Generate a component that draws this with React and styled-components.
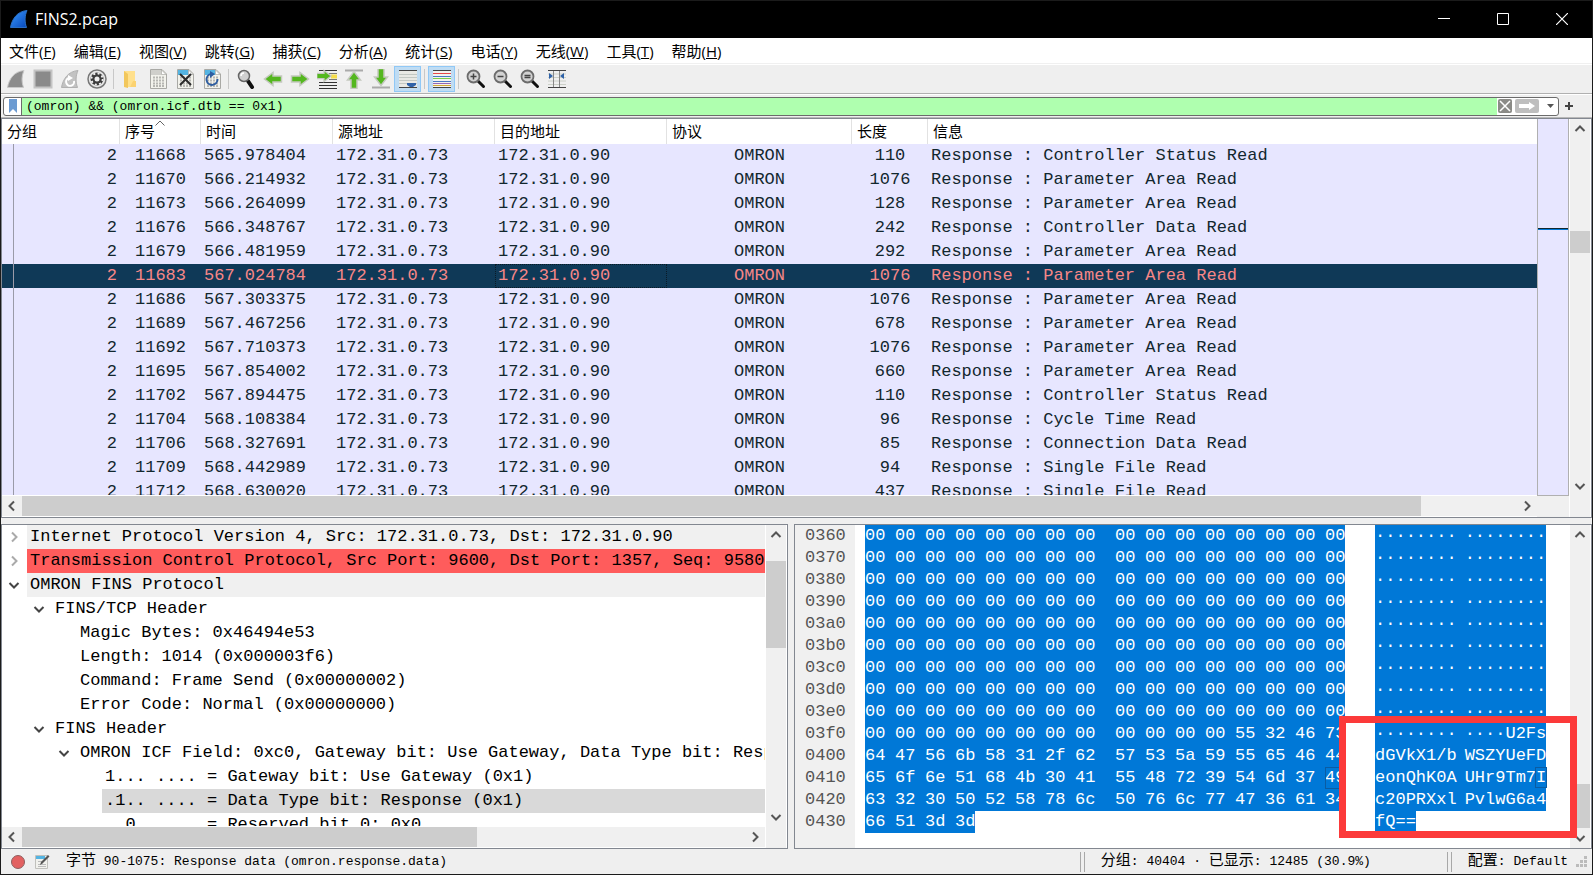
import React from "react";
import styled, { createGlobalStyle } from "styled-components";

const MONO = `"Liberation Mono", "Noto Sans CJK SC", monospace`;
const UI = `"Open Sans", "Noto Sans CJK SC", sans-serif`;

const menus = [
  ["文件", "F"],
  ["编辑", "E"],
  ["视图", "V"],
  ["跳转", "G"],
  ["捕获", "C"],
  ["分析", "A"],
  ["统计", "S"],
  ["电话", "Y"],
  ["无线", "W"],
  ["工具", "T"],
  ["帮助", "H"],
];

const columns = [
  { label: "分组", width: 118 },
  { label: "序号", width: 81, sorted: true },
  { label: "时间", width: 132 },
  { label: "源地址", width: 162 },
  { label: "目的地址", width: 172 },
  { label: "协议", width: 185 },
  { label: "长度", width: 76 },
  { label: "信息" },
];

const packets = [
  ["11668", "565.978404", "110", "Controller Status Read"],
  ["11670", "566.214932", "1076", "Parameter Area Read"],
  ["11673", "566.264099", "128", "Parameter Area Read"],
  ["11676", "566.348767", "242", "Controller Data Read"],
  ["11679", "566.481959", "292", "Parameter Area Read"],
  ["11683", "567.024784", "1076", "Parameter Area Read"],
  ["11686", "567.303375", "1076", "Parameter Area Read"],
  ["11689", "567.467256", "678", "Parameter Area Read"],
  ["11692", "567.710373", "1076", "Parameter Area Read"],
  ["11695", "567.854002", "660", "Parameter Area Read"],
  ["11702", "567.894475", "110", "Controller Status Read"],
  ["11704", "568.108384", "96", "Cycle Time Read"],
  ["11706", "568.327691", "85", "Connection Data Read"],
  ["11709", "568.442989", "94", "Single File Read"],
  ["11712", "568.630020", "437", "Single File Read"],
];
const selectedPacket = "11683";

const details = [
  { level: 0, arrow: "closed", tone: "#f0f0f0", text: "Internet Protocol Version 4, Src: 172.31.0.73, Dst: 172.31.0.90" },
  { level: 0, arrow: "closed", tone: "#ff5c5c", text: "Transmission Control Protocol, Src Port: 9600, Dst Port: 1357, Seq: 9580," },
  { level: 0, arrow: "open", tone: "#f0f0f0", text: "OMRON FINS Protocol" },
  { level: 1, arrow: "open", text: "FINS/TCP Header" },
  { level: 2, text: "Magic Bytes: 0x46494e53" },
  { level: 2, text: "Length: 1014 (0x000003f6)" },
  { level: 2, text: "Command: Frame Send (0x00000002)" },
  { level: 2, text: "Error Code: Normal (0x00000000)" },
  { level: 1, arrow: "open", text: "FINS Header" },
  { level: 2, arrow: "open", text: "OMRON ICF Field: 0xc0, Gateway bit: Use Gateway, Data Type bit: Response" },
  { level: 3, text: "1... .... = Gateway bit: Use Gateway (0x1)" },
  { level: 3, tone: "#d9d9d9", text: ".1.. .... = Data Type bit: Response (0x1)" },
  { level: 3, text: "..0. .... = Reserved bit 0: 0x0" },
];

const zeros = "00 ".repeat(16).trim();
const dump = [
  ["0360", zeros],
  ["0370", zeros],
  ["0380", zeros],
  ["0390", zeros],
  ["03a0", zeros],
  ["03b0", zeros],
  ["03c0", zeros],
  ["03d0", zeros],
  ["03e0", zeros],
  ["03f0", "00 00 00 00 00 00 00 00 00 00 00 00 55 32 46 73"],
  ["0400", "64 47 56 6b 58 31 2f 62 57 53 5a 59 55 65 46 44"],
  ["0410", "65 6f 6e 51 68 4b 30 41 55 48 72 39 54 6d 37 49"],
  ["0420", "63 32 30 50 52 58 78 6c 50 76 6c 77 47 36 61 34"],
  ["0430", "66 51 3d 3d"],
];
const hovered = { row: "0410", index: 15 };

const toAscii = (byte) => {
  const code = parseInt(byte, 16);
  return code > 31 && code < 127 ? String.fromCharCode(code) : "·";
};

/* ---------- icons ---------- */

const Fin = ({ fill, edge }) => (
  <path d="M1.5 18.5C3 10 8 2.5 18 1.5C15.500 7 15.500 13 17.500 18.500Z" fill={fill} stroke={edge} strokeWidth="1" />
);

const Sheet = ({ head, children }) => (
  <>
    <path d="M2.500 .5H14L18.500 5V19.500H2.500Z" fill="#f2f2ec" stroke="#a9a9a5" />
    <path d="M3 1H13.500V6H3Z" fill={head} />
    <path d="M13.500 1V5.500H18Z" fill="#fff" stroke="#a9a9a5" strokeWidth=".7" />
    {children}
  </>
);

const Dots = () => (
  <path d="M5 8.500H16M5 11.500H16M5 14.500H16M5 17H16" stroke="#b6b6b2" strokeWidth="2" strokeDasharray="2 1" />
);

const Arrow = ({ turn = 0, x = 10, y = 10, size = 1 }) => (
  <path
    transform={`translate(${x} ${y}) rotate(${turn}) scale(${size})`}
    d="M-8.500 -3H0V-6.500L8.500 0L0 6.500V3H-8.500Z"
    fill="#54b71f"
    stroke="#c5c9c0"
    strokeWidth="1.500"
  />
);

const Lens = ({ children }) => (
  <>
    <path d="M12 12L17.500 17.500" stroke="#111" strokeWidth="3" strokeLinecap="round" />
    <circle cx="7.500" cy="7.500" r="6" fill="#d2d2d2" stroke="#6c6c6c" strokeWidth="1.800" />
    {children}
  </>
);

const icons = {
  start: <Fin fill="#8c8c8c" edge="#c9c9c9" />,
  stop: <rect x="1.500" y="1.500" width="17" height="17" fill="#8a8a8a" stroke="#c4c4c4" strokeWidth="2" />,
  restart: (
    <>
      <Fin fill="#c2c2c2" edge="#b0b0b0" />
      <path d="M9 9A4 4 0 1 0 14 12" fill="none" stroke="#fff" strokeWidth="2" />
      <path d="M8 6L13 9L8 12Z" fill="#fff" />
    </>
  ),
  options: (
    <>
      <circle cx="10" cy="10" r="9" fill="#e8e8e8" stroke="#777" strokeWidth="1.500" />
      <circle cx="10" cy="10" r="6.500" fill="#3c3c3c" />
      <circle cx="10" cy="10" r="5.500" fill="none" stroke="#eee" strokeWidth="2" strokeDasharray="2 2.300" />
      <circle cx="10" cy="10" r="4.500" fill="#3c3c3c" />
      <circle cx="10" cy="10" r="2.500" fill="#eee" />
    </>
  ),
  open: (
    <>
      <path d="M3 2H14V18H3Z" fill="#ffe08c" />
      <path d="M3 2L7 5V19L3 18Z" fill="#f2c75c" />
      <path d="M12 12H15V18H9Z" fill="#fbd271" />
    </>
  ),
  save: (
    <Sheet head="#cfcfcb">
      <Dots />
    </Sheet>
  ),
  close: (
    <Sheet head="#54b4e2">
      <Dots />
      <path d="M5 5L16 16M16 5L5 16" stroke="#2b2b2b" strokeWidth="2" />
    </Sheet>
  ),
  reload: (
    <Sheet head="#54b4e2">
      <Dots />
      <path d="M9 5A5.500 5.500 0 1 0 15.500 10" fill="none" stroke="#2e5da0" strokeWidth="2" />
      <path d="M8 2L13 5L8 9Z" fill="#2e5da0" />
    </Sheet>
  ),
  find: (
    <>
      <path d="M12 12L16 18" stroke="#111" strokeWidth="4" strokeLinecap="round" />
      <circle cx="8" cy="7" r="5.500" fill="#cfcfcf" stroke="#666" strokeWidth="1.500" />
      <path d="M5 7A3 3 0 0 1 8 4" fill="none" stroke="#fff" strokeWidth="1.500" />
    </>
  ),
  back: <Arrow turn={180} />,
  forward: <Arrow />,
  goto: (
    <>
      <path d="M2 1.500H20M2 13.500H20M2 16.500H20M2 19.500H20" stroke="#333" />
      <path d="M12 4.500H20M12 10.500H20" stroke="#777" />
      <path d="M14 7.500H20" stroke="#f5dc49" strokeWidth="4" />
      <Arrow x={7} y={7} size={0.85} />
    </>
  ),
  top: (
    <>
      <path d="M1 1.500H19" stroke="#aaa" strokeWidth="2" />
      <Arrow turn={-90} y={11} />
    </>
  ),
  bottom: (
    <>
      <path d="M1 18.500H19" stroke="#aaa" strokeWidth="2" />
      <Arrow turn={90} y={8} />
    </>
  ),
  follow: (
    <>
      <path d="M1 2H19V18H1Z" fill="#e9e9e4" />
      <path d="M1 5.500H19M1 8.500H19M1 11.500H19M1 14.500H19" stroke="#c3c8c3" />
      <path d="M1 1.500H19M1 18.500H19" stroke="#444" />
      <path d="M9 14H18V16L15 18H12L9 16Z" fill="#2f62a8" />
    </>
  ),
  colorize: (
    <>
      <path d="M1 2H19V18H1Z" fill="#f3f3ef" />
      <path d="M1 1.500H19M1 18.500H19" stroke="#444" />
      <path d="M1 4.500H19" stroke="#e5484a" />
      <path d="M1 7.500H19" stroke="#4a78c4" />
      <path d="M1 9.500H19" stroke="#7bd04b" />
      <path d="M1 12.500H19" stroke="#4a78c4" />
      <path d="M1 14.500H19" stroke="#9468b5" />
      <path d="M1 16.500H19" stroke="#d0a534" />
    </>
  ),
  zoomIn: (
    <Lens>
      <path d="M4.500 7.500H10.500M7.500 4.500V10.500" stroke="#444" strokeWidth="1.500" />
    </Lens>
  ),
  zoomOut: (
    <Lens>
      <path d="M4.500 7.500H10.500" stroke="#444" strokeWidth="1.500" />
    </Lens>
  ),
  zoomReset: (
    <Lens>
      <path d="M4.500 6.500H10.500M4.500 8.500H10.500" stroke="#444" strokeWidth="1.500" />
    </Lens>
  ),
  resize: (
    <>
      <path d="M1 5H19M1 8.500H19M1 12H19M1 15.500H19" stroke="#ccd0c8" />
      <path d="M1 1.500H19M1 18.500H19" stroke="#444" />
      <path d="M6.500 2V18M12.500 2V18" stroke="#888" />
      <path d="M2 4L6 7L2 10ZM17 4L13 7L17 10Z" fill="#2f62a8" />
    </>
  ),
};

const toolbar = [
  ["start", "开始捕获"],
  ["stop", "停止捕获"],
  ["restart", "重新开始捕获"],
  ["options", "捕获选项"],
  null,
  ["open", "打开"],
  ["save", "保存"],
  ["close", "关闭"],
  ["reload", "重新加载"],
  null,
  ["find", "查找分组"],
  ["back", "后退"],
  ["forward", "前进"],
  ["goto", "转到分组"],
  ["top", "首个分组"],
  ["bottom", "最新分组"],
  ["follow", "自动滚动", true],
  null,
  ["colorize", "着色", true],
  null,
  ["zoomIn", "放大"],
  ["zoomOut", "缩小"],
  ["zoomReset", "普通大小"],
  ["resize", "调整列宽"],
];

const Chevron = ({ turn = 0, color = "#555" }) => (
  <svg width="12" height="12" viewBox="0 0 12 12" aria-hidden="true">
    <path d="M1.500 8L6 3.500L10.500 8" transform={`rotate(${turn} 6 6)`} fill="none" stroke={color} strokeWidth="2" />
  </svg>
);

/* ---------- pieces ---------- */

// before / thumb / after are the shares of the track
const ScrollBar = ({ horizontal, before, thumb, after }) => (
  <Track $horizontal={horizontal}>
    <ScrollButton aria-label={horizontal ? "向左" : "向上"}>
      <Chevron turn={horizontal ? -90 : 0} />
    </ScrollButton>
    <TrackSpace $share={before} />
    <Thumb $share={thumb} />
    <TrackSpace $share={after} />
    <ScrollButton aria-label={horizontal ? "向右" : "向下"}>
      <Chevron turn={horizontal ? 90 : 180} />
    </ScrollButton>
  </Track>
);

const PacketList = () => (
  <PacketPane>
    <ListSide>
      <Clip>
        <Table>
          <colgroup>
            {columns.map((c) => (
              <Col key={c.label} $width={c.width} />
            ))}
          </colgroup>
          <thead>
            <tr>
              {columns.map((c) => (
                <Head key={c.label}>
                  {c.label}
                  {c.sorted && (
                    <SortMark width="10" height="6" viewBox="0 0 10 6" aria-hidden="true">
                      <path d="M.5 5.500L5 1L9.500 5.500" fill="none" stroke="#666" />
                    </SortMark>
                  )}
                </Head>
              ))}
            </tr>
          </thead>
          <tbody>
            {packets.map(([no, time, length, info]) => (
              <PacketRow key={no} $selected={no === selectedPacket}>
                <GroupCell>2</GroupCell>
                <Cell $align="center">{no}</Cell>
                <Cell>{time}</Cell>
                <Cell>172.31.0.73</Cell>
                <Cell $focused={no === selectedPacket}>172.31.0.90</Cell>
                <Cell $align="center">OMRON</Cell>
                <Cell $align="center">{length}</Cell>
                <Cell>Response : {info}</Cell>
              </PacketRow>
            ))}
          </tbody>
        </Table>
      </Clip>
      <ScrollBar horizontal before={0} thumb={1399} after={96} />
    </ListSide>
    <MapSide>
      <MiniMap>
        <MapSpace $share={109} />
        <MapLine />
        <MapSpace $share={265} />
      </MiniMap>
      <Corner />
    </MapSide>
    <BarSide>
      <ScrollBar before={91} thumb={22} after={222} />
      <Corner />
    </BarSide>
  </PacketPane>
);

const DetailTree = () => (
  <TreePane>
    <ListSide>
      <Clip>
        {details.map((d) => (
          <TreeRow key={d.text} $level={d.level}>
            <Toggle>
              {d.arrow === "open" && <Chevron turn={180} color="#444" />}
              {d.arrow === "closed" && <Chevron turn={90} color="#aaa" />}
            </Toggle>
            <TreeText $tone={d.tone}>{d.text}</TreeText>
          </TreeRow>
        ))}
      </Clip>
      <ScrollBar horizontal before={0} thumb={455} after={268} />
    </ListSide>
    <BarSide>
      <ScrollBar before={16} thumb={87} after={160} />
      <Corner />
    </BarSide>
  </TreePane>
);

const DumpRow = ({ offset, bytes }) => {
  const list = bytes.split(" ");
  const halves = [list.slice(0, 8), list.slice(8)].filter((half) => half.length);
  const isHovered = (half, i) => offset === hovered.row && half * 8 + i === hovered.index;
  return (
    <DumpLine>
      <Offset>{offset}</Offset>
      <HexArea>
        <HexMark>
          {halves.map((half, h) => (
            <HexHalf key={h}>
              {half.map((b, i) => (
                <Byte key={i} $outlined={isHovered(h, i)}>
                  {b}
                </Byte>
              ))}
            </HexHalf>
          ))}
        </HexMark>
      </HexArea>
      <AsciiMark>
        {halves.map((half, h) => (
          <span key={h}>
            {half.map((b, i) =>
              isHovered(h, i) ? <HoveredChar key={i}>{toAscii(b)}</HoveredChar> : toAscii(b)
            )}
          </span>
        ))}
      </AsciiMark>
    </DumpLine>
  );
};

const BytesView = () => (
  <BytesPane>
    <Dump>
      {dump.map(([offset, bytes]) => (
        <DumpRow key={offset} offset={offset} bytes={bytes} />
      ))}
      <OffsetFill />
    </Dump>
    <BarSide>
      <ScrollBar before={239} thumb={44} after={0} />
    </BarSide>
    <Highlight />
  </BytesPane>
);

const App = () => {
  const [filter, setFilter] = React.useState("(omron) && (omron.icf.dtb == 0x1)");

  return (
    <Window>
      <GlobalStyle />
      <TitleBar>
        <svg width="20" height="20" viewBox="0 0 20 20" aria-hidden="true">
          <defs>
            <linearGradient id="fin" x1="0" y1="0" x2="1" y2="1">
              <stop offset="0" stopColor="#3a9bff" />
              <stop offset="1" stopColor="#0645b8" />
            </linearGradient>
          </defs>
          <Fin fill="url(#fin)" edge="#2a6fc4" />
        </svg>
        <h1>FINS2.pcap</h1>
        <WindowButton aria-label="最小化">
          <svg width="12" height="12" viewBox="0 0 12 12">
            <path d="M0 5.500H12" stroke="#fff" />
          </svg>
        </WindowButton>
        <WindowButton aria-label="最大化">
          <svg width="12" height="12" viewBox="0 0 12 12">
            <path d="M.5 .5H11.500V11.500H.5Z" fill="none" stroke="#fff" />
          </svg>
        </WindowButton>
        <WindowButton aria-label="关闭">
          <svg width="12" height="12" viewBox="0 0 12 12">
            <path d="M0 0L12 12M12 0L0 12" stroke="#fff" strokeWidth="1.200" />
          </svg>
        </WindowButton>
      </TitleBar>

      <MenuBar>
        {menus.map(([name, key]) => (
          <button key={name}>
            {name}(<u>{key}</u>)
          </button>
        ))}
      </MenuBar>

      <ToolBar>
        {toolbar.map((item, i) =>
          item ? (
            <ToolButton key={item[0]} aria-label={item[1]} $active={item[2]}>
              <svg width="20" height="20" viewBox="0 0 20 20">
                {icons[item[0]]}
              </svg>
            </ToolButton>
          ) : (
            <Divider key={i} />
          )
        )}
      </ToolBar>

      <FilterBar>
        <FilterBox>
          <Bookmark aria-label="书签">
            <svg width="10" height="14" viewBox="0 0 10 14">
              <path d="M1 0H9V14L5 10L1 14Z" fill="#6c9bd2" />
            </svg>
          </Bookmark>
          <input aria-label="显示过滤器" value={filter} onChange={(e) => setFilter(e.target.value)} />
          <FilterButton aria-label="清除" $tone="#8b8b87" $width={14} onClick={() => setFilter("")}>
            <svg width="14" height="14" viewBox="0 0 14 14">
              <path d="M2 2L12 12M12 2L2 12" stroke="#fff" strokeWidth="1.500" />
            </svg>
          </FilterButton>
          <FilterButton aria-label="应用" $tone="#bebebe" $width={24}>
            <svg width="24" height="14" viewBox="0 0 24 14">
              <path d="M4 5H14V3L20 7L14 11V9H4Z" fill="#fff" />
            </svg>
          </FilterButton>
          <FilterButton aria-label="历史" $width={14}>
            <svg width="8" height="4" viewBox="0 0 8 4">
              <path d="M0 0H7L3.500 4Z" fill="#555" />
            </svg>
          </FilterButton>
        </FilterBox>
        <AddButton aria-label="添加">
          <svg width="8" height="8" viewBox="0 0 8 8">
            <path d="M0 4H8M4 0V8" stroke="#444" strokeWidth="2" />
          </svg>
        </AddButton>
      </FilterBar>

      <Main>
        <PacketList />
        <Lower>
          <DetailTree />
          <BytesView />
        </Lower>
      </Main>

      <StatusBar>
        <svg width="16" height="16" viewBox="0 0 16 16" aria-hidden="true">
          <circle cx="8" cy="8" r="6.500" fill="#e26161" stroke="#8d6060" />
        </svg>
        <svg width="16" height="16" viewBox="0 0 16 16" aria-hidden="true">
          <path d="M1.500 1.500H13.500V14.500H1.500Z" fill="#f1f1ed" stroke="#c0c0bc" />
          <path d="M2 2H11V5H2Z" fill="#54b4e2" />
          <path d="M4 7.500H8M4 10.500H12M4 12.500H12" stroke="#bbb" />
          <path d="M6 11L7 8L14 1L15.500 2.500L8.500 9.500Z" fill="#555" />
        </svg>
        <StatusText $grow>
          <Han>字节</Han> 90-1075: Response data (omron.response.data)
        </StatusText>
        <Grip />
        <StatusText $width={346}>
          <Han>分组</Han>: 40404 · <Han>已显示</Han>: 12485 (30.9%)
        </StatusText>
        <Grip />
        <StatusText>
          <Han>配置</Han>: Default
        </StatusText>
        <svg width="12" height="12" viewBox="0 0 12 12" aria-hidden="true">
          <path d="M8 0H11V3H8ZM4 4H7V7H4ZM8 4H11V7H8ZM0 8H3V11H0ZM4 8H7V11H4ZM8 8H11V11H8Z" fill="#bbb" />
        </svg>
      </StatusBar>
    </Window>
  );
};

const GlobalStyle = createGlobalStyle`
  * {
    box-sizing: border-box;
  }
  body {
    margin: 0;
    background-color: #efefef;
  }
  button {
    display: flex;
    align-items: center;
    justify-content: center;
    flex-shrink: 0;
    padding: 0;
    border: none;
    background: none;
    color: inherit;
    font: inherit;
  }
  svg {
    display: block;
    flex-shrink: 0;
  }
`;

const Window = styled.div`
  display: flex;
  flex-direction: column;
  height: 100vh;
  border: 1px solid #1b1b1b;
  background-color: #efefef;
  color: #000;
  overflow: hidden;
`;

const TitleBar = styled.header`
  display: flex;
  align-items: center;
  height: 37px;
  flex-shrink: 0;
  padding: 0 1px 2px 8px;
  background-color: #000;
  color: #fff;
  h1 {
    flex: 1;
    margin: 0 0 0 6px;
    font: 400 16px ${UI};
  }
`;

const WindowButton = styled.button`
  width: 59px;
  height: 100%;
`;

const MenuBar = styled.nav`
  display: flex;
  align-items: center;
  height: 26px;
  flex-shrink: 0;
  border-bottom: 1px solid #f0f0f0;
  background-color: #fff;
  font: 15px ${UI};
  button {
    height: 100%;
    padding: 0 10px 0 8px;
  }
`;

const ToolBar = styled.div`
  display: flex;
  align-items: center;
  height: 30px;
  flex-shrink: 0;
  padding: 0 1px 1px;
  border-top: 1px solid #fff;
  border-bottom: 1px solid #b0b0b0;
`;

const ToolButton = styled.button`
  width: 27px;
  height: 26px;
  border: 1px solid ${(p) => (p.$active ? "#90c8f6" : "transparent")};
  background-color: ${(p) => (p.$active ? "#bfdcf3" : "transparent")};
`;

const Divider = styled.span`
  width: 1px;
  height: 20px;
  margin: 0 3px;
  background-color: #c8c8c8;
`;

const FilterBar = styled.div`
  display: flex;
  align-items: center;
  height: 24px;
  flex-shrink: 0;
  padding-left: 2px;
  border-top: 1px solid #fff;
  border-bottom: 1px solid #b8b8b8;
`;

const FilterBox = styled.div`
  display: flex;
  align-items: center;
  flex: 1;
  height: 19px;
  border: 1px solid #6b6b6b;
  border-radius: 3px;
  background-color: #fff;
  overflow: hidden;
  input {
    flex: 1;
    min-width: 0;
    height: 100%;
    margin-right: 1px;
    padding: 0 4px;
    border: none;
    outline: none;
    background-color: #afffaf;
    color: #000;
    font: 13px ${MONO};
  }
`;

const Bookmark = styled.button`
  width: 18px;
  height: 100%;
  border-right: 1px solid #6b6b6b;
`;

const FilterButton = styled.button`
  width: ${(p) => p.$width}px;
  height: 14px;
  margin-right: 3px;
  border-radius: 2px;
  background-color: ${(p) => p.$tone || "transparent"};
  &:last-child {
    margin: 0 0 0 2px;
  }
`;

const AddButton = styled.button`
  width: 20px;
  height: 20px;
  margin-right: 13px;
`;

const Main = styled.main`
  display: flex;
  flex-direction: column;
  flex: 1;
  gap: 6px;
  min-height: 0;
`;

const Pane = styled.section`
  display: flex;
  min-width: 0;
  min-height: 0;
  border: 1px solid #828790;
  background-color: #fff;
`;

const PacketPane = styled(Pane)`
  flex: 399 1 0;
`;

const Lower = styled.div`
  display: flex;
  flex: 326 1 0;
  gap: 6px;
  min-height: 0;
`;

const TreePane = styled(Pane)`
  flex: 787 1 0;
`;

const BytesPane = styled(Pane)`
  position: relative;
  flex: 798 1 0;
`;

const ListSide = styled.div`
  display: flex;
  flex-direction: column;
  flex: 1;
  min-width: 0;
`;

const Clip = styled.div`
  flex: 1;
  min-height: 0;
  overflow: hidden;
`;

const Table = styled.table`
  width: 100%;
  table-layout: fixed;
  border-collapse: separate;
  border-spacing: 0;
`;

const Col = styled.col`
  width: ${(p) => (p.$width ? p.$width + "px" : "auto")};
`;

const Head = styled.th`
  position: relative;
  height: 25px;
  padding: 0 5px 2px;
  border-right: 1px solid #e2e2e2;
  text-align: left;
  font: 400 15px / 22px "Noto Sans CJK SC", sans-serif;
  &:last-child {
    border-right: none;
  }
`;

const SortMark = styled.svg`
  position: absolute;
  top: 1px;
  left: 50%;
  margin-left: -5px;
`;

const Cell = styled.td`
  height: 24px;
  padding: 0 3px;
  outline: ${(p) => (p.$focused ? "1px dotted #0a1a26" : "none")};
  outline-offset: -1px;
  text-align: ${(p) => p.$align || "left"};
  white-space: pre;
`;

const GroupCell = styled(Cell)`
  background: linear-gradient(#9a9aa8, #9a9aa8) 11px 0 / 1px 100% no-repeat;
  text-align: right;
`;

const PacketRow = styled.tr`
  background-color: ${(p) => (p.$selected ? "#0f3957" : "#e7e6ff")};
  color: ${(p) => (p.$selected ? "#f78787" : "#12272e")};
  font: 17px / 24px ${MONO};
`;

const MapSide = styled.div`
  display: flex;
  flex-direction: column;
  width: 32px;
  flex-shrink: 0;
`;

const MiniMap = styled.div`
  display: flex;
  flex-direction: column;
  flex: 1;
  border: 1px solid #b0b0b0;
  border-top: none;
  background-color: #e7e6ff;
`;

const MapSpace = styled.div`
  flex: ${(p) => p.$share} 1 0;
`;

const MapLine = styled.div`
  height: 2px;
  border-top: 1px solid #12272e;
  background-color: #0078d7;
`;

const Corner = styled.div`
  height: 21px;
  flex-shrink: 0;
  background-color: #f0f0f0;
`;

const BarSide = styled.div`
  display: flex;
  flex-direction: column;
  width: 22px;
  flex-shrink: 0;
  padding: 0 1px;
`;

const Track = styled.div`
  display: flex;
  flex-direction: ${(p) => (p.$horizontal ? "row" : "column")};
  flex: ${(p) => (p.$horizontal ? "0 0 21px" : "1")};
  border: 0 solid #fff;
  border-width: ${(p) => (p.$horizontal ? "1px 0" : "0")};
  background-color: #f0f0f0;
`;

const ScrollButton = styled.button`
  width: 20px;
  height: 20px;
`;

const TrackSpace = styled.div`
  flex: ${(p) => p.$share} 1 0;
`;

const Thumb = styled.div`
  flex: ${(p) => p.$share} 1 0;
  background-color: #cdcdcd;
`;

const TreeRow = styled.div`
  display: flex;
  height: 24px;
  padding-left: ${(p) => p.$level * 25}px;
`;

const Toggle = styled.span`
  display: flex;
  align-items: center;
  justify-content: center;
  width: 25px;
  flex-shrink: 0;
  padding-right: 2px;
`;

const TreeText = styled.span`
  flex: 1;
  min-width: 0;
  padding-left: 3px;
  background-color: ${(p) => p.$tone || "transparent"};
  font: 17px / 24px ${MONO};
  white-space: pre;
  overflow: hidden;
`;

const Dump = styled.div`
  display: flex;
  flex-direction: column;
  flex: 1;
  min-width: 0;
  overflow: hidden;
  color: #fff;
  font: 17px / 22px ${MONO};
`;

const DumpLine = styled.div`
  display: flex;
  height: 22px;
  flex-shrink: 0;
`;

const Offset = styled.span`
  width: 60px;
  flex-shrink: 0;
  padding-left: 10px;
  background-color: #f0f0f0;
  color: #555;
`;

const OffsetFill = styled.span`
  width: 60px;
  flex: 1;
  background-color: #f0f0f0;
`;

const HexArea = styled.div`
  display: flex;
  width: 520px;
  flex-shrink: 0;
  padding-left: 10px;
`;

const HexMark = styled.div`
  display: flex;
  gap: 20px;
  background-color: #0078d7;
`;

const HexHalf = styled.span`
  display: flex;
  gap: 10px;
`;

const Byte = styled.span`
  width: 20px;
  outline: ${(p) => (p.$outlined ? "1px solid #0a5ca3" : "none")};
  outline-offset: -1px;
`;

const HoveredChar = styled.span`
  outline: 1px solid #0a5ca3;
`;

const AsciiMark = styled.div`
  display: flex;
  gap: 8px;
  background-color: #0078d7;
`;

/* marks the readable part of the payload */
const Highlight = styled.div`
  position: absolute;
  right: 14px;
  bottom: 10px;
  width: 238px;
  height: 122px;
  border: 7px solid #fc3a3a;
  pointer-events: none;
`;

const StatusBar = styled.footer`
  display: flex;
  align-items: center;
  height: 25px;
  flex-shrink: 0;
  gap: 8px;
  padding: 0 4px 0 9px;
  font: 13px / 20px ${MONO};
`;

const StatusText = styled.span`
  flex: ${(p) => (p.$grow ? "1" : "none")};
  width: ${(p) => (p.$width ? p.$width + "px" : "auto")};
  padding-left: 8px;
  white-space: pre;
`;

const Han = styled.span`
  font-size: 15px;
`;

const Grip = styled.span`
  width: 5px;
  height: 20px;
  border: 1px solid #a8a8a8;
  border-width: 0 1px;
`;

export default App;
